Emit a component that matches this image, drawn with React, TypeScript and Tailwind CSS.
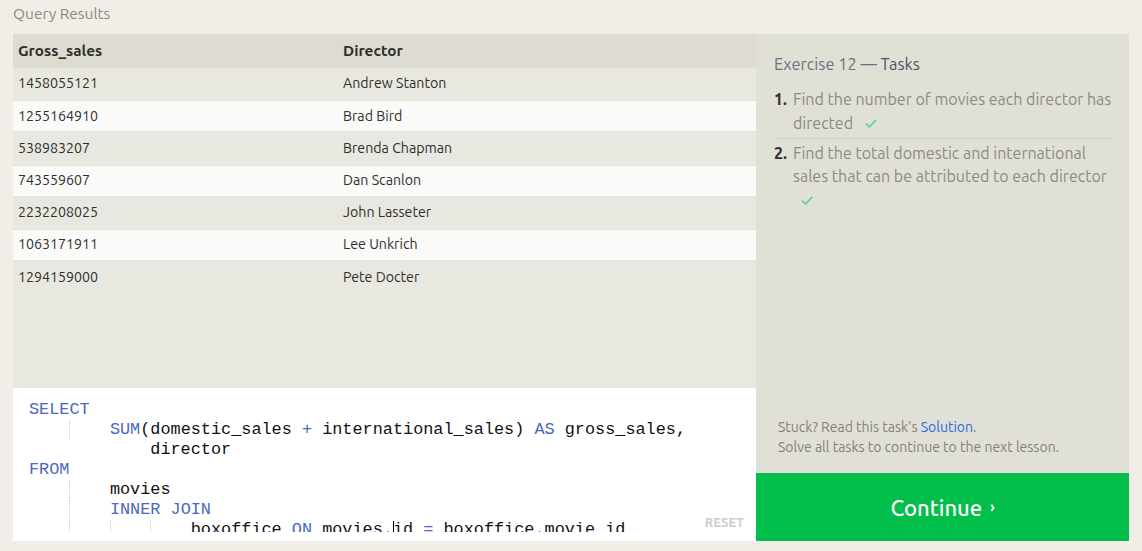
const rows = [
  ['1458055121', 'Andrew Stanton'],
  ['1255164910', 'Brad Bird'],
  ['538983207', 'Brenda Chapman'],
  ['743559607', 'Dan Scanlon'],
  ['2232208025', 'John Lasseter'],
  ['1063171911', 'Lee Unkrich'],
  ['1294159000', 'Pete Docter'],
]

const ui = { fontFamily: 'Ubuntu, "Open Sans", sans-serif' }

function Guide({ left }: { left: number }) {
  return <span className="absolute top-0 bottom-0 border-l border-dotted border-[#cfcfcf]" style={{ left }} />
}

function K({ children }: { children: React.ReactNode }) {
  return <span className="text-[#4b67c2]">{children}</span>
}

function CodeEditor() {
  const ch = 10.1
  return (
    <div className="relative h-[153px] bg-white pt-[12px] pb-[9px] pl-4">
      <div className="h-full overflow-hidden font-['Liberation_Mono',monospace] text-[16.85px] leading-[20px] text-[#111] whitespace-pre">
        <div><K>SELECT</K></div>
        <div className="relative">
          <Guide left={4 * ch} />
          {'        '}<K>SUM</K>(domestic_sales <K>+</K> international_sales) <K>AS</K> gross_sales,
        </div>
        <div>{'            '}director</div>
        <div><K>FROM</K></div>
        <div className="relative">
          <Guide left={4 * ch} />
          {'        '}movies
        </div>
        <div className="relative">
          <Guide left={4 * ch} />
          {'        '}<K>INNER JOIN</K>
        </div>
        <div className="relative">
          <Guide left={4 * ch} />
          <Guide left={8 * ch} />
          <Guide left={12 * ch} />
          {'                '}boxoffice <K>ON</K> movies.<span className="relative"><span className="absolute left-0 top-[1px] h-[18px] w-px bg-black" />id</span> <K>=</K> boxoffice.movie_id
        </div>
      </div>
      <span className="absolute right-[12px] bottom-[9px] text-[13px] font-bold text-[#cdcdcd]" style={ui}>RESET</span>
    </div>
  )
}

function Check() {
  return <span className="ml-2 text-[17px] text-[#4fcf86]">✓</span>
}

export default function App() {
  return (
    <div className="h-[551px] w-[1142px] bg-[#f0eee7] px-[13px]" style={ui}>
      <div className="h-[34px] pt-[2px] text-[15.5px] text-[#8a8a86]">Query Results</div>
      <div className="flex h-[507px]">
        <div className="flex w-[743px] flex-col">
          <div className="flex-1 bg-[#e9e8e0] text-[14.2px] text-[#2e2e2e]">
            <div className="flex h-[34px] items-center bg-[#dedcd2] text-[15.3px] font-bold">
              <div className="w-[330px] pl-[5px]">Gross_sales</div>
              <div>Director</div>
            </div>
            {rows.map(([g, d], i) => (
              <div
                key={g}
                className={
                  i % 2 === 1
                    ? 'flex h-[32.2px] items-center border-y border-[#e2e2de] bg-[#fafaf8]'
                    : 'flex h-[32.2px] items-center'
                }
              >
                <div className="w-[330px] pl-[5px]">{g}</div>
                <div>{d}</div>
              </div>
            ))}
          </div>
          <CodeEditor />
        </div>
        <div className="flex w-[373px] flex-col">
          <div className="flex flex-1 flex-col bg-[#e1e0d6] pl-[18px] pr-[16px] pt-[18px]">
            <div className="text-[16.4px] text-[#6c7084]">
              Exercise 12 — <span className="text-[#4e5366]">Tasks</span>
            </div>
            <ol className="mt-[11px] text-[16px] leading-[23px] text-[#8b8b86]">
              <li className="flex border-b border-[#d2d1c8] pb-[3px]">
                <span className="w-[19px] shrink-0 font-bold text-[#2e2e2e]">1.</span>
                <span>Find the number of movies each director has directed <Check /></span>
              </li>
              <li className="flex pt-[3px]">
                <span className="w-[19px] shrink-0 font-bold text-[#2e2e2e]">2.</span>
                <span>
                  Find the total domestic and international sales that can be attributed to each director
                  <br />
                  <Check />
                </span>
              </li>
            </ol>
            <div className="mt-auto pb-[16px] pl-[4px] text-[14px] leading-[20px] text-[#857f7b]">
              <div>
                Stuck? Read this task's <span className="text-[#2a6bdd]">Solution</span>.
              </div>
              <div>Solve all tasks to continue to the next lesson.</div>
            </div>
          </div>
          <div className="flex h-[68px] items-center justify-center bg-[#02bf4b] text-[22px] font-medium text-white">
            Continue <span className="ml-2 text-[14px] font-bold">›</span>
          </div>
        </div>
      </div>
    </div>
  )
}
